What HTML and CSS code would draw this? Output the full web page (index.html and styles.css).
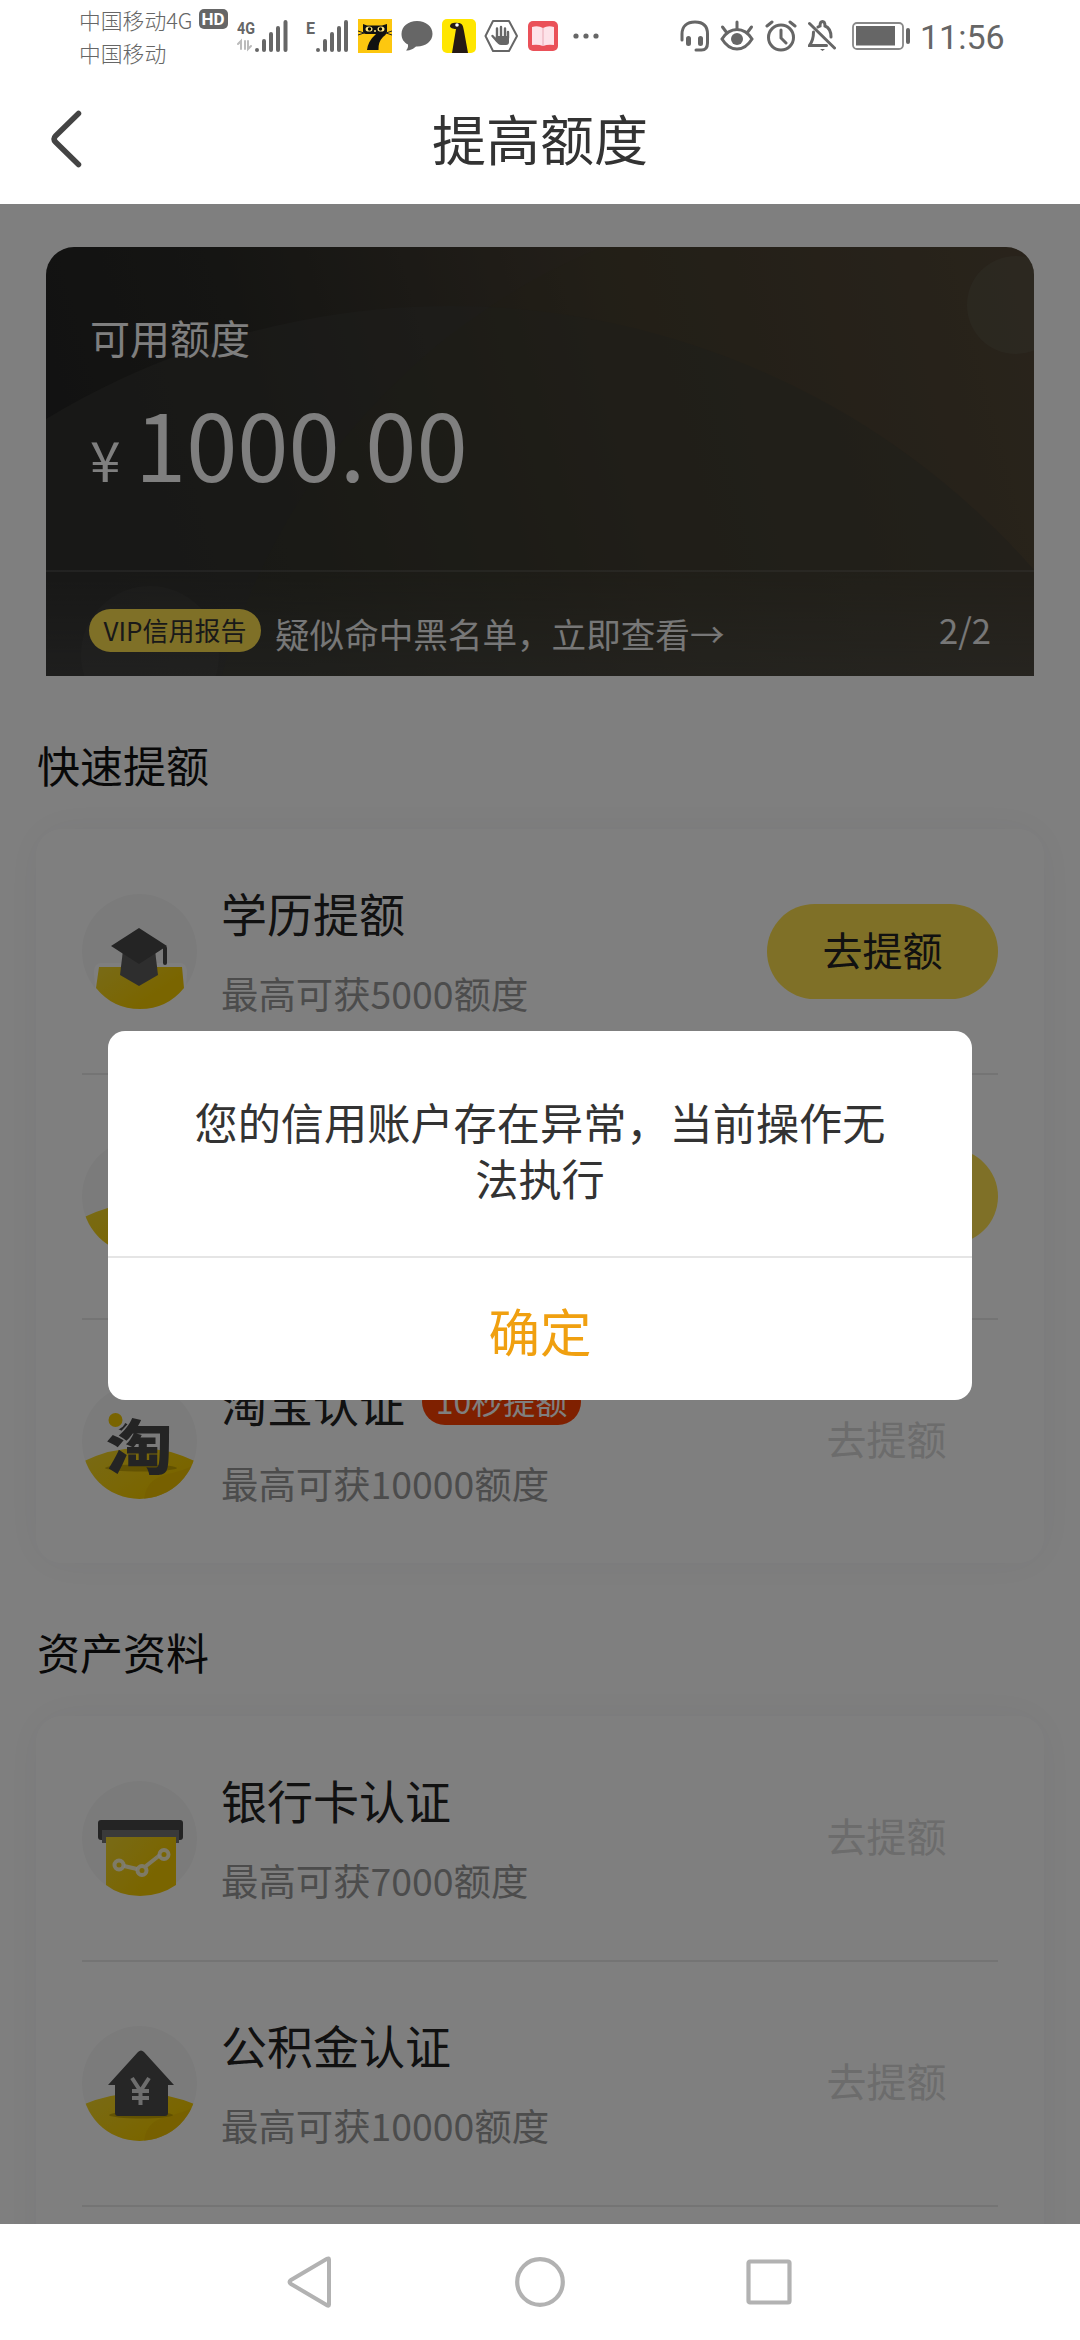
FILE: index.html
```html
<!DOCTYPE html>
<html lang="zh-CN">
<head>
<meta charset="utf-8">
<title>提高额度</title>
<link rel="stylesheet" href="styles.css">
</head>
<body>
<svg class="defs" width="0" height="0">
  <defs>
    <linearGradient id="gold" x1="0" y1="0" x2="1" y2="0.7">
      <stop offset="0" stop-color="#f2d62e"/><stop offset="0.75" stop-color="#f5cb00"/>
    </linearGradient>
    <clipPath id="disc"><circle cx="57.5" cy="57.5" r="57.5"/></clipPath>
  </defs>
</svg>
<div class="phone">
  <header class="status">
    <div class="carriers">
      <div class="carrier">中国移动4G<span class="hd">HD</span></div>
      <div class="carrier">中国移动</div>
    </div>
    <div class="tray">
      <svg class="sig" width="51" height="34" viewBox="0 0 51 34" fill="none" stroke="#666" stroke-width="4" stroke-linecap="round">
        <text class="net" x="0" y="15" textLength="18" lengthAdjust="spacingAndGlyphs">4G</text>
        <path stroke="#bbb" stroke-width="2" d="M4 30V22l-3 3M8 22v8M11 22v8l3-3"/>
        <path d="M20 31v0M27 31V22M34 31V15M41 31V9M48.500 31V3"/>
      </svg>
      <svg class="sig2" width="43" height="34" viewBox="0 0 43 34" fill="none" stroke="#666" stroke-width="4" stroke-linecap="round">
        <text class="net" x="0" y="15">E</text>
        <path d="M12 31v0M19 31V22M26 31V15M33 31V9M40 31V3"/>
      </svg>
      <svg class="cat" width="34" height="34" viewBox="0 0 34 34">
        <rect width="34" height="34" fill="#fdc70f"/>
        <path d="M5 5l4 1.500h15L29 5v8q-1 3-4 5-5 5-4.500 13H9q1-9 9-16H8q-3 0-3-3z" fill="#111"/>
        <path d="M0 12l6 2M0 16l6-2M34 12l-6 2M34 16l-6-2" stroke="#222"/>
        <ellipse cx="11" cy="10" rx="3.500" ry="2.600" fill="#ffe680"/><ellipse cx="23" cy="10" rx="3.500" ry="2.600" fill="#ffe680"/>
        <circle cx="11.500" cy="10" r="1.700"/><circle cx="22.500" cy="10" r="1.700"/><circle cx="17" cy="12" r="1" fill="#ffe680"/>
      </svg>
      <svg class="bubble" width="32" height="32" viewBox="0 0 32 32"><path d="M16 1C7 1 .5 6.500.5 14c0 5 2.500 8.500 6.500 10.500.500 3-1 5-2 6 5 0 7.500-2 10-4 9 .5 16.500-5 16.500-12.500S25 1 16 1z" fill="#666"/></svg>
      <svg class="neck" width="34" height="34" viewBox="0 0 34 34"><rect width="34" height="34" rx="5" fill="#ffe600"/><path d="M10 34l4-24c-3 0-6-1-6-3 0-3 4-4 8-3 4 0 5 2 6 8l4 22z" fill="#251a15"/><circle cx="15" cy="6" r="1.800" fill="#fff"/></svg>
      <svg class="hand" width="34" height="34" viewBox="0 0 34 34" fill="none" stroke="#666" stroke-linecap="round"><path d="M9 2h16l8 15-8 15H9L1.500 17z" stroke-width="2" stroke-linejoin="round"/><path d="M13 9.500v9M17 8v9M21 9.500v9M24 13v6M8.500 17l4.500 5" stroke-width="2.400"/><path d="M12 17h13v6q0 3-3 3h-5q-3 0-6-5z" fill="#666" stroke="none"/></svg>
      <svg class="book" width="30" height="30" viewBox="0 0 30 30"><rect width="30" height="30" rx="5" fill="#ea5159"/><path d="M4 6q6-2 11 1 5-3 11-1v18q-6-1-11 1-5-2-11-1z" fill="#fde3e9"/><path d="M15 7v18" stroke="#e9a8b4"/></svg>
      <svg class="dots" width="26" height="6" viewBox="0 0 26 6" fill="#666"><circle cx="3" cy="3" r="2.600"/><circle cx="13" cy="3" r="2.600"/><circle cx="23" cy="3" r="2.600"/></svg>
      <svg class="phones" width="30" height="32" viewBox="0 0 30 32" fill="none" stroke="#666" stroke-width="3" stroke-linecap="round"><path d="M2 20v-6C2 6 7 2 15 2s12.500 4 12.500 12v9q0 7-6 7H16"/><path d="M8.500 18.500v5M20.500 18.500v5" stroke-width="5"/></svg>
      <svg class="eye" width="34" height="32" viewBox="0 0 34 32" fill="none" stroke="#666" stroke-width="3" stroke-linecap="round"><path d="M2 19Q8 9.500 17 9.500T32 19Q26 29 17 29T2 19zM17 2v6M2.500 7l4.500 6M31.500 7L27 13"/><circle cx="17" cy="19" r="6" fill="#666" stroke="none"/></svg>
      <svg class="alarm" width="32" height="32" viewBox="0 0 32 32" fill="none" stroke="#666" stroke-width="3" stroke-linecap="round"><circle cx="16" cy="17.500" r="12.500"/><path d="M16 10v8l5 5M2 6l5-4M30 6l-5-4"/></svg>
      <svg class="bell" width="28" height="32" viewBox="0 0 28 32" fill="none" stroke="#666" stroke-width="3" stroke-linecap="round"><path d="M1.500 3.500L26.500 28M5.500 12q0 8-4 13.500h17M10 7l2-1c0-6 5-6 5 0 5 2 6 6 6 11"/><path d="M12 29h5l-2.500 2z" fill="#666" stroke="none"/></svg>
      <svg class="battery" width="58" height="28" viewBox="0 0 58 28"><rect x="1" y="1" width="50" height="26" rx="4" fill="none" stroke="#888" stroke-width="1.800"/><rect x="4" y="4" width="39" height="19.500" fill="#666"/><rect x="54" y="6" width="4" height="16" rx="2" fill="#666"/></svg>
      <span class="clock">11:56</span>
    </div>
  </header>
  <nav class="navbar">
    <svg class="back" width="34" height="62" viewBox="0 0 34 62"><path d="M29.500 5.500L6.500 28q-3 3 0 6l23 22.500" fill="none" stroke="#444" stroke-width="5.500" stroke-linecap="round"/></svg>
    <h1>提高额度</h1>
  </nav>

  <main class="page">
    <section class="hero">
      <div class="quota">
        <svg class="rings" width="988" height="429" viewBox="46 247 988 429">
          <circle cx="450" cy="1084" r="778" fill="#3c3c38" fill-opacity=".5"/>
          <circle cx="850" cy="850" r="652" fill="#40401e" fill-opacity=".14"/>
          <circle cx="1016" cy="305" r="49" fill="#6a7060" fill-opacity=".25"/>
          <circle cx="150" cy="655" r="69" fill="#fff" fill-opacity=".03"/>
        </svg>
        <div class="quota-main">
          <div class="quota-label">可用额度</div>
          <div class="quota-value"><span class="yen">¥</span><span class="num">1000.00</span></div>
        </div>
        <div class="quota-foot">
          <span class="vip">VIP信用报告</span>
          <span class="notice">疑似命中黑名单，立即查看→</span>
          <span class="pager">2/2</span>
        </div>
      </div>
    </section>

    <h2>快速提额</h2>
    <section class="card">
      <div class="row">
        <svg class="icon" width="115" height="115" viewBox="0 0 115 115">
          <circle cx="57.500" cy="57.500" r="57.500" fill="#f7f7f7"/>
          <path d="M12 78q0-9 8-9h77q8 0 8 9l-2 27H14z" fill="#fff"/>
          <path d="M17 73h83l2 21q-17 21-44 21T14 94z" fill="url(#gold)"/>
          <path d="M41 56h32l3 25-19 11-19-11z" fill="#5d5d5d"/>
          <path d="M57 34l28 18-28 18-28-18z" fill="#484848"/><path d="M83 54v15" stroke="#484848" stroke-width="4" stroke-linecap="round"/>
        </svg>
        <div class="info"><div class="name">学历提额</div><div class="desc">最高可获5000额度</div></div>
        <span class="btn">去提额</span>
      </div>
      <div class="row">
        <svg class="icon" width="115" height="115" viewBox="0 0 115 115">
          <circle cx="57.500" cy="57.500" r="57.500" fill="#f7f7f7"/>
          <path clip-path="url(#disc)" d="M0 79q57-28 115 0v40H0z" fill="url(#gold)"/>
        </svg>
        <div class="info"></div>
        <span class="btn"></span>
      </div>
      <div class="row">
        <svg class="icon" width="115" height="115" viewBox="0 0 115 115">
          <circle cx="57.500" cy="57.500" r="57.500" fill="#f7f7f7"/>
          <path clip-path="url(#disc)" d="M0 78q57-28 115 0v40H0z" fill="url(#gold)"/>
          <path clip-path="url(#disc)" d="M62 118q0-24 28-29 20-5 25-11v40z" fill="#e8b900" fill-opacity=".55"/>
          <ellipse cx="59" cy="84" rx="36" ry="3.500" fill="#a98b00" fill-opacity=".6"/>
          <text class="tao" x="23" y="85" transform="translate(0 7) scale(1.04 .92)">淘</text>
          <circle cx="34" cy="36" r="9.500" fill="#f7f7f7"/>
          <circle cx="33.500" cy="36" r="7" fill="#f2c800"/>
        </svg>
        <div class="info"><div class="name">淘宝认证<span class="tag">10秒提额</span></div><div class="desc">最高可获10000额度</div></div>
        <span class="btn off">去提额</span>
      </div>
    </section>

    <h2>资产资料</h2>
    <section class="card">
      <div class="row">
        <svg class="icon" width="115" height="115" viewBox="0 0 115 115">
          <circle cx="57.500" cy="57.500" r="57.500" fill="#f7f7f7"/>
          <rect x="16" y="39" width="85" height="20" rx="3" fill="#484848"/>
          <path d="M20 49h77v13H20z" fill="#747474"/>
          <path d="M24 56h70v48q-16 11-36 11t-34-11z" fill="url(#gold)"/>
          <g fill="none" stroke="#fff" stroke-opacity=".8" stroke-width="4"><path d="M42 85l13 3M64 85l14-11"/><circle cx="37" cy="84" r="4.500"/><circle cx="60" cy="89.500" r="4.500"/><circle cx="82" cy="73.500" r="4.500"/></g>
        </svg>
        <div class="info"><div class="name">银行卡认证</div><div class="desc">最高可获7000额度</div></div>
        <span class="btn off">去提额</span>
      </div>
      <div class="row">
        <svg class="icon" width="115" height="115" viewBox="0 0 115 115">
          <circle cx="57.500" cy="57.500" r="57.500" fill="#f7f7f7"/>
          <path clip-path="url(#disc)" d="M0 79q57-24 115 0v40H0z" fill="url(#gold)"/>
          <path clip-path="url(#disc)" d="M62 118q0-24 28-29 20-5 25-11v40z" fill="#e8b900" fill-opacity=".55"/>
          <ellipse cx="59" cy="89" rx="32" ry="3.500" fill="#a98b00" fill-opacity=".6"/>
          <path d="M56 26q3-3 6 0l30 33H86v28q0 3-3 3H36q-3 0-3-3V59H26z" fill="#4d4d4d"/>
          <path d="M50 52l8.500 13L67 52M58.500 65v14M50 65h17M50 72h17" fill="none" stroke="#ddd" stroke-width="4"/>
        </svg>
        <div class="info"><div class="name">公积金认证</div><div class="desc">最高可获10000额度</div></div>
        <span class="btn off">去提额</span>
      </div>
      <div class="row"></div>
    </section>

    <div class="mask">
      <div class="dialog">
        <p class="message">您的信用账户存在异常，当前操作无法执行</p>
        <div class="confirm">确定</div>
      </div>
    </div>
  </main>

  <footer class="keys">
    <svg width="50" height="54" viewBox="0 0 50 54"><path d="M43 4.500v45q0 2-2 .7L5 29q-3-2 0-4L41 3.800q2-1 2 .7z" fill="none" stroke="#b2b2b2" stroke-width="4"/></svg>
    <svg width="50" height="54" viewBox="0 0 50 54"><circle cx="25" cy="27" r="22.800" fill="none" stroke="#b2b2b2" stroke-width="4.200"/></svg>
    <svg width="50" height="54" viewBox="0 0 50 54"><rect x="4.500" y="6.500" width="41" height="41" rx="1.500" fill="none" stroke="#b2b2b2" stroke-width="4.200"/></svg>
  </footer>
</div>
</body>
</html>
```
FILE: styles.css
```css
* { box-sizing: border-box; margin: 0; padding: 0; }
body { font-family: "Noto Sans CJK SC", sans-serif; background: #fff; color: #222; }
svg { display: block; flex: none; }
.defs { position: absolute; }
.phone { width: 1080px; height: 2340px; overflow: hidden; display: flex; flex-direction: column; }
h1, h2 { font-weight: 400; }

/* status bar */
.status { height: 72px; display: flex; color: #666; white-space: nowrap; }
.carriers { width: 237px; padding: 3px 0 0 79px; font-size: 21.8px; font-weight: 300; }
.carrier { display: flex; align-items: center; height: 33px; }
.hd { margin-left: 6px; margin-top: -2px; width: 29px; height: 20px; border-radius: 5px; background: #666; color: #fff; font: 700 17px/20px Roboto, sans-serif; text-align: center; }
.tray { display: flex; align-items: center; height: 72px; }
.net { font: 700 16px Roboto, sans-serif; fill: #666; stroke: none; }
.sig2 { margin-left: 18px; }
.cat { margin-left: 9px; }
.bubble { margin-left: 9px; }
.neck { margin-left: 9px; }
.hand { margin-left: 8px; }
.book { margin-left: 10px; }
.dots { margin-left: 15px; }
.phones { margin-left: 81px; }
.eye { margin-left: 10px; }
.alarm { margin-left: 11px; }
.bell { margin-left: 11px; }
.battery { margin-left: 16px; }
.clock { margin-left: 10px; font: 34px/40px Roboto, sans-serif; padding-top: 2px; }

/* title bar */
.navbar { height: 132px; display: grid; grid-template-columns: 180px 1fr 180px; align-items: center; }
.back { margin: 1px 0 0 49px; }
.navbar h1 { font-size: 54px; line-height: 80px; color: #333; text-align: center; margin-top: -1px; }

/* page */
.page { position: relative; height: 2020px; overflow: hidden; }
.hero { height: 472px; padding: 43px 46px 0; overflow: hidden; }
.quota { position: relative; height: 429px; border-radius: 28px 28px 0 0; overflow: hidden; color: #fff; background: linear-gradient(75deg, #242424 5%, #2a2a26 25%, #463e32 60%, #56493c 100%); }
.rings { position: absolute; inset: 0; }
.quota-main { position: relative; height: 323px; padding: 60px 45px 0 44px; }
.quota-label { font-size: 40px; line-height: 60px; }
.quota-value { display: flex; align-items: baseline; margin-top: 15px; line-height: 120px; }
.yen { font-size: 55px; width: 45px; }
.num { font-size: 92.2px; }
.quota-foot { position: relative; height: 106px; display: flex; align-items: flex-start; padding: 38px 43px 0; border-top: 2px solid rgba(255,255,255,.05); background: linear-gradient(rgba(90,90,90,0), rgba(100,100,100,.24)); font-size: 34.6px; line-height: 50px; color: #eee; }
.vip { width: 172px; height: 43px; margin-right: 14px; border-radius: 22px; background: #ffe14e; color: #333; font-size: 26px; line-height: 41px; text-align: center; flex: none; margin-top: -1px; }
.notice { white-space: nowrap; margin-top: -2px; }
.pager { margin-left: auto; margin-top: -6px; }

h2 { font-size: 43px; line-height: 60px; padding: 58px 0 35px 37px; color: #111; }
.card { margin: 0 36px; padding: 1px 46px 0; border-radius: 26px; box-shadow: 0 0 44px rgba(20,20,50,.05); }
.row { height: 245px; border-bottom: 2px solid #e8e8e8; display: flex; align-items: center; gap: 24px; }
.row:last-child { height: 243px; border-bottom: 0; }
.info { flex: 1; display: flex; flex-direction: column; gap: 26px; padding-bottom: 3px; }
.name { font-size: 46px; line-height: 60px; display: flex; align-items: center; }
.desc { font-size: 37.4px; line-height: 50px; color: #999; }
.tag { margin-left: 17px; width: 159px; height: 46px; border-radius: 23px; background: #ff4000; color: #fff; font-size: 32px; line-height: 43px; text-align: center; }
.btn { width: 231px; height: 95px; border-radius: 48px; background: #ffe14e; font-size: 40px; line-height: 90px; text-align: center; }
.off { background: none; color: #d8d8d8; padding-left: 8px; line-height: 88px; }
.tao { font: 900 64px "Noto Sans CJK SC", sans-serif; fill: #484848; }

/* dialog */
.mask { position: absolute; inset: 0; display: flex; align-items: center; justify-content: center; background: rgba(0,0,0,.5); }
.dialog { width: 864px; height: 369px; margin-top: 2px; border-radius: 17px; background: #fff; }
.message { height: 227px; padding: 62px 80px 0; border-bottom: 2px solid #e5e5e5; font-size: 43.2px; line-height: 56px; color: #333; text-align: center; }
.confirm { font-size: 51.5px; line-height: 143px; color: #f0a010; text-align: center; }

/* system keys */
.keys { height: 116px; display: flex; align-items: center; justify-content: center; gap: 179px; background: #fff; }
```
